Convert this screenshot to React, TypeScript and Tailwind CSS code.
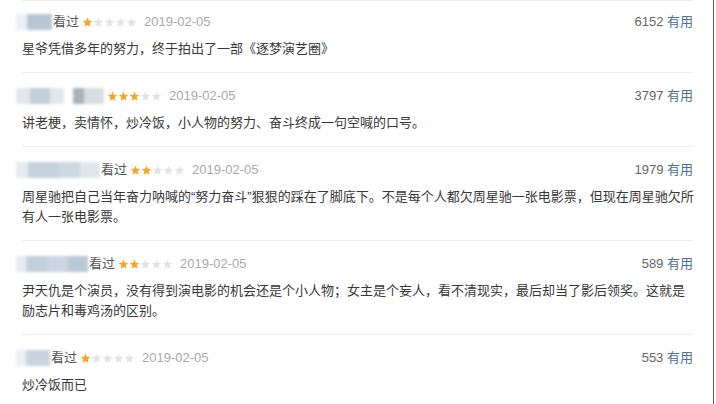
import React from 'react';

type Seg = { w: number; c: string };

interface Review {
  blur: Seg[];
  watched: boolean;
  rating: number;
  date: string;
  votes: string;
  lines: string[];
}

const reviews: Review[] = [
  {
    blur: [{ w: 11, c: '#eceff2' }, { w: 25, c: '#b7c5d4' }],
    watched: true,
    rating: 1,
    date: '2019-02-05',
    votes: '6152',
    lines: ['星爷凭借多年的努力，终于拍出了一部《逐梦演艺圈》'],
  },
  {
    blur: [{ w: 14, c: '#e3e7eb' }, { w: 20, c: '#c4cfda' }, { w: 14, c: '#e2e6ea' }, { w: 9, c: '#ffffff' }, { w: 11, c: '#aab0b8' }, { w: 20, c: '#d9dce0' }],
    watched: false,
    rating: 3,
    date: '2019-02-05',
    votes: '3797',
    lines: ['讲老梗，卖情怀，炒冷饭，小人物的努力、奋斗终成一句空喊的口号。'],
  },
  {
    blur: [{ w: 12, c: '#e6eaee' }, { w: 30, c: '#c6d1dc' }, { w: 22, c: '#cfd7e0' }, { w: 20, c: '#e0e5ea' }],
    watched: true,
    rating: 2,
    date: '2019-02-05',
    votes: '1979',
    lines: [
      '周星驰把自己当年奋力呐喊的“努力奋斗”狠狠的踩在了脚底下。不是每个人都欠周星驰一张电影票，但现在周星驰欠所',
      '有人一张电影票。',
    ],
  },
  {
    blur: [{ w: 10, c: '#e8ecf0' }, { w: 22, c: '#c2cfdc' }, { w: 20, c: '#cbd6e1' }, { w: 20, c: '#b9c8d7' }],
    watched: true,
    rating: 2,
    date: '2019-02-05',
    votes: '589',
    lines: [
      '尹天仇是个演员，没有得到演电影的机会还是个小人物；女主是个妄人，看不清现实，最后却当了影后领奖。这就是',
      '励志片和毒鸡汤的区别。',
    ],
  },
  {
    blur: [{ w: 10, c: '#eceff2' }, { w: 24, c: '#c9d4df' }],
    watched: true,
    rating: 1,
    date: '2019-02-05',
    votes: '553',
    lines: ['炒冷饭而已'],
  },
];

const Star = ({ on }: { on: boolean }) => (
  <svg width="11" height="10" viewBox="0 0 24 23" className="shrink-0">
    <polygon
      points="12,1 15,8.6 23,9.2 17,14.6 18.8,22.4 12,18.2 5.2,22.4 7,14.6 1,9.2 9,8.6"
      fill={on ? '#f4a522' : '#e3e3e3'}
    />
  </svg>
);

const Blurred = ({ segs }: { segs: Seg[] }) => (
  <div className="flex h-[16px] -ml-[6px] blur-[1.5px]">
    {segs.map((s, i) => (
      <div key={i} className="h-full" style={{ width: s.w, background: s.c }} />
    ))}
  </div>
);

export default function App() {
  return (
    <div
      className="w-[716px] h-[404px] overflow-hidden bg-white"
      style={{ fontFamily: '"Liberation Sans", "Noto Sans CJK SC", sans-serif' }}
    >
      <div className="w-[714px] h-full border-r border-[#555] pl-[22px] pr-[20px]">
        {reviews.map((r, idx) => (
          <div
            key={idx}
            className={`border-t border-[#ececec] pb-[13px] ${idx === 0 ? 'pt-[11px]' : 'pt-[13px]'}`}
          >
            <div className="flex items-center h-[20px] text-[13px]">
              <Blurred segs={r.blur} />
              {r.watched && <span className="ml-[1px] text-[#555]">看过</span>}
              <div className="flex ml-[3px] mr-[7px]">
                {[0, 1, 2, 3, 4].map(i => (
                  <Star key={i} on={i < r.rating} />
                ))}
              </div>
              <span className="text-[#aaa]">{r.date}</span>
              <span className="ml-auto text-[#666]">
                {r.votes} <span className="text-[#4d7196]">有用</span>
              </span>
            </div>
            <div className="mt-[7px] text-[13px] leading-[20px] text-[#383838]">
              {r.lines.map((l, i) => (
                <div key={i} className="whitespace-nowrap">{l}</div>
              ))}
            </div>
          </div>
        ))}
      </div>
    </div>
  );
}
